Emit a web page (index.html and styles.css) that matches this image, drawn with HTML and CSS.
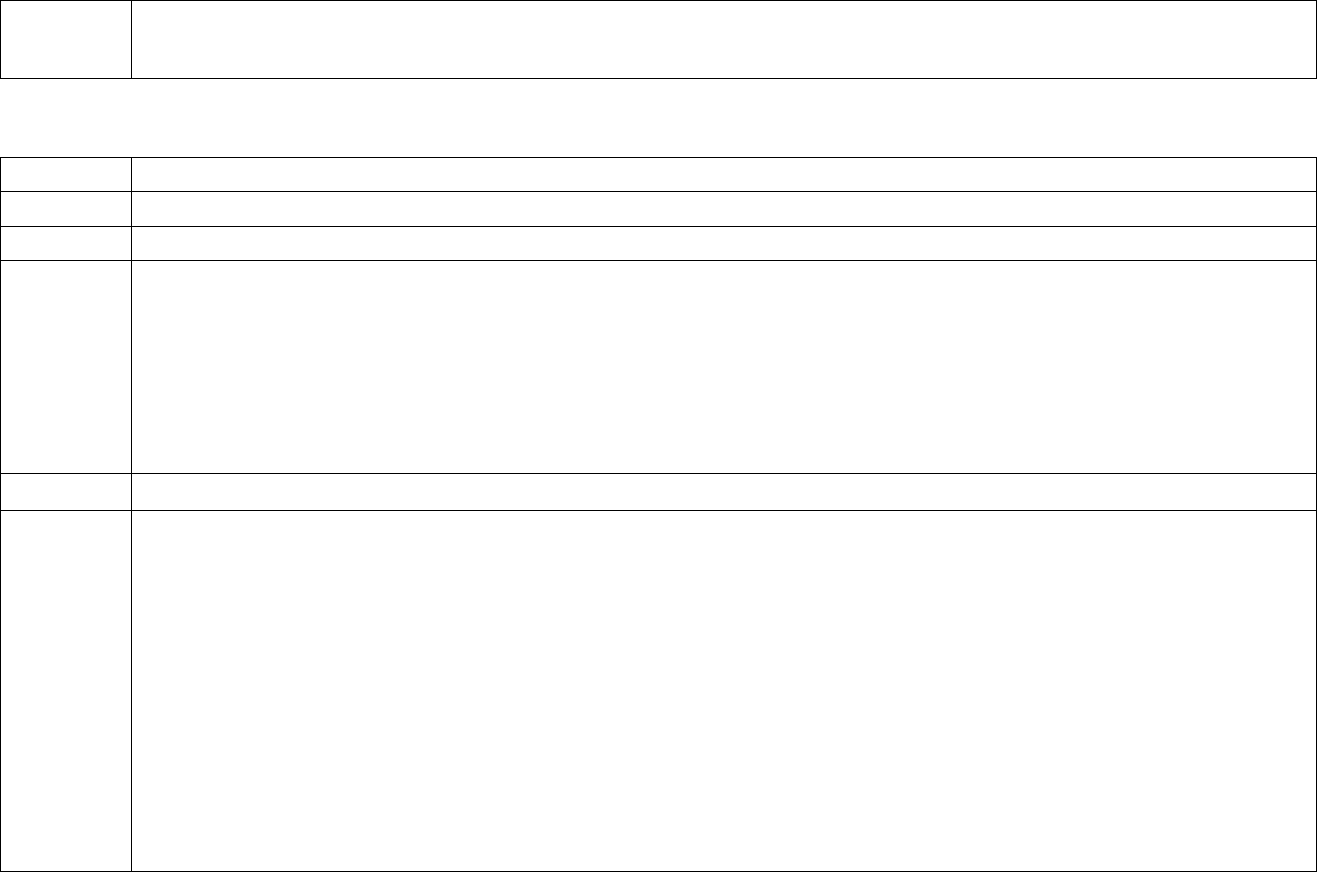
FILE: index.html
```html
<!DOCTYPE html>
<html lang="en">
<head>
  <meta charset="UTF-8" />
  <title>Form</title>
  <link rel="stylesheet" href="styles.css">
</head>
<body>
  <!-- header block -->
  <div class="grid head">
    <div class="cell"></div>
    <div class="cell"></div>
  </div>

  <!-- detail block -->
  <div class="grid detail">
    <div class="cell"></div><div class="cell"></div>
    <div class="cell"></div><div class="cell"></div>
    <div class="cell"></div><div class="cell"></div>
    <div class="cell"></div><div class="cell"></div>
    <div class="cell"></div><div class="cell"></div>
    <div class="cell"></div><div class="cell"></div>
  </div>
</body>
</html>
```

FILE: styles.css
```css
* { box-sizing: border-box; }
html, body {
  margin: 0;
  background: #fff;
  font-family: 'Liberation Serif', serif;
}
.grid {
  display: grid;
  grid-template-columns: 130px 1184px;
  gap: 1px;
  padding: 1px;
  background: #000;
  width: 1317px;
}
.cell { background: #fff; }
.head { grid-template-rows: 77px; }
.detail {
  margin-top: 78px;
  grid-template-rows: 33px 34px 33px 212px 36px 360px;
}
```
